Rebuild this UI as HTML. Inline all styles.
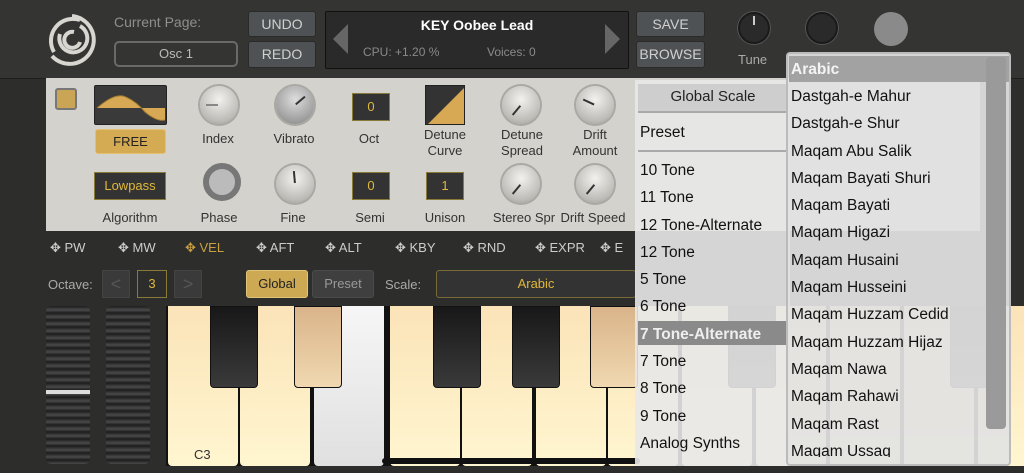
<!DOCTYPE html>
<html><head><style>
*{margin:0;padding:0;box-sizing:border-box}
body{width:1024px;height:473px;overflow:hidden;background:#2d2d2b;font-family:"Liberation Sans",sans-serif;position:relative}
.a{position:absolute}
.btn{position:absolute;background:#4f5254;border:1px solid #2a2a2a;color:#d0d0d0;font-size:14px;text-align:center;border-radius:3px}
.lbl{position:absolute;font-size:13px;color:#333;text-align:center;width:80px;line-height:16px}
.knob{position:absolute;width:38px;height:38px;border-radius:50%;background:radial-gradient(circle at 50% 35%,#f2f1ee,#bdbbb6 70%,#8d8b86);box-shadow:0 0 0 2px #aaa8a2}
.knob i{position:absolute;left:18px;top:6px;width:2px;height:12px;background:#333;transform-origin:1px 13px}
.dk{position:absolute;width:38px;height:28px;background:#333;border:1px solid #8a7a3a;color:#e0b83a;font-size:13px;text-align:center;line-height:26px}
.mod{position:absolute;top:240px;font-size:13px;color:#ccc}
.wk{position:absolute;top:306px;height:160px;width:70px;border-radius:0 0 4px 4px;background:linear-gradient(#fbe3b8,#fff6d0)}
.bk{position:absolute;top:306px;height:82px;width:48px;border-radius:0 0 4px 4px;background:linear-gradient(#181818,#3a3a3a);border:1px solid #111}
</style></head><body>
<div class="a" style="left:0;top:0;width:1024px;height:79px;background:#343432;border-bottom:1px solid #1e1e1e"></div>
<svg class="a" style="left:44px;top:12px" width="56" height="56" viewBox="0 0 56 56"><g fill="none" stroke="#d8d6d0" stroke-width="4"><path d="M28 4A24 24 0 1 1 8 44"/><path d="M10 40A22 22 0 0 1 36 8" /><path d="M36 14A14 14 0 1 1 16 22"/><path d="M30 20A8 8 0 1 0 36 30"/></g></svg>
<div class="a" style="left:114px;top:14px;color:#8e8e8c;font-size:14px">Current Page:</div>
<div class="a" style="left:114px;top:41px;width:124px;height:26px;border:2px solid #6a6a68;border-radius:5px;color:#bbb;font-size:13px;text-align:center;line-height:22px">Osc 1</div>
<div class="btn" style="left:248px;top:11px;width:68px;height:26px;line-height:24px">UNDO</div>
<div class="btn" style="left:248px;top:41px;width:68px;height:27px;line-height:25px">REDO</div>
<div class="a" style="left:325px;top:11px;width:304px;height:58px;background:#2a2a2a;border:1px solid #111;border-radius:2px"></div>
<div class="a" style="left:333px;top:24px;width:0;height:0;border-top:15px solid transparent;border-bottom:15px solid transparent;border-right:15px solid #666"></div>
<div class="a" style="left:605px;top:24px;width:0;height:0;border-top:15px solid transparent;border-bottom:15px solid transparent;border-left:15px solid #666"></div>
<div class="a" style="left:325px;top:17px;width:304px;text-align:center;color:#fff;font-weight:bold;font-size:14px">KEY Oobee Lead</div>
<div class="a" style="left:363px;top:45px;color:#8a8a8a;font-size:12px">CPU: +1.20 %</div>
<div class="a" style="left:487px;top:45px;color:#8a8a8a;font-size:12px">Voices: 0</div>
<div class="btn" style="left:636px;top:11px;width:69px;height:26px;line-height:24px">SAVE</div>
<div class="btn" style="left:636px;top:41px;width:69px;height:27px;line-height:25px">BROWSE</div>
<div class="a" style="left:738px;top:12px;width:32px;height:32px;border-radius:50%;background:#2a2a2a;border:2px solid #1a1a1a;box-shadow:0 0 0 1px #555"></div>
<div class="a" style="left:753px;top:16px;width:2px;height:9px;background:#ccc"></div>
<div class="a" style="left:738px;top:52px;color:#aaa;font-size:13px">Tune</div>
<div class="a" style="left:806px;top:12px;width:32px;height:32px;border-radius:50%;background:#2a2a2a;border:2px solid #1a1a1a;box-shadow:0 0 0 1px #555"></div>
<div class="a" style="left:874px;top:12px;width:34px;height:34px;border-radius:50%;background:#8a8a8a"></div>
<div class="a" style="left:46px;top:78px;width:934px;height:153px;background:#d4d2cc"></div>
<div class="a" style="left:55px;top:88px;width:22px;height:22px;background:#c9a555;border:2px solid #777;border-radius:3px"></div>
<div class="a" style="left:94px;top:85px;width:73px;height:40px;background:#3a3a3a;border:1px solid #222;border-radius:2px;overflow:hidden"><svg width="73" height="40"><path d="M2 22 Q18 8 28 10 Q40 14 50 26 Q62 36 70 34 L70 22 L2 22Z" fill="#d8a955"/><path d="M2 22 Q18 8 28 10 Q40 14 50 26 Q62 36 70 34" stroke="#a07a30" fill="none"/></svg></div>
<div class="a" style="left:95px;top:129px;width:71px;height:25px;background:#d4aa52;border:1px solid #e5c070;border-radius:3px;font-size:13px;text-align:center;line-height:24px;color:#222">FREE</div>
<div class="dk" style="left:94px;top:172px;width:72px;font-size:13px">Lowpass</div>
<div class="knob" style="left:200px;top:86px"><i style="transform:rotate(-90deg);background:#888"></i></div>
<div class="knob" style="left:276px;top:86px;background:radial-gradient(circle at 50% 35%,#ddd,#999 75%,#666)"><i style="transform:rotate(50deg)"></i></div>
<div class="dk" style="left:352px;top:93px">0</div>
<div class="a" style="left:425px;top:85px;width:40px;height:40px;background:#333;border:1px solid #222"><svg width="40" height="40"><path d="M2 38 L38 2 L38 38Z" fill="#d8a955"/></svg></div>
<div class="knob" style="left:502px;top:86px"><i style="transform:rotate(-140deg)"></i></div>
<div class="knob" style="left:576px;top:86px"><i style="transform:rotate(-65deg)"></i></div>
<div class="lbl" style="left:178px;top:131px">Index</div>
<div class="lbl" style="left:254px;top:131px">Vibrato</div>
<div class="lbl" style="left:329px;top:131px">Oct</div>
<div class="lbl" style="left:405px;top:127px">Detune<br>Curve</div>
<div class="lbl" style="left:482px;top:127px">Detune<br>Spread</div>
<div class="lbl" style="left:555px;top:127px">Drift<br>Amount</div>
<div class="a" style="left:203px;top:163px;width:38px;height:38px;border-radius:50%;border:6px solid #777;background:#bbb"></div>
<div class="knob" style="left:276px;top:165px"><i style="transform:rotate(-5deg)"></i></div>
<div class="dk" style="left:352px;top:172px">0</div>
<div class="dk" style="left:426px;top:172px">1</div>
<div class="knob" style="left:502px;top:165px"><i style="transform:rotate(-140deg)"></i></div>
<div class="knob" style="left:576px;top:165px"><i style="transform:rotate(-140deg)"></i></div>
<div class="lbl" style="left:90px;top:210px">Algorithm</div>
<div class="lbl" style="left:179px;top:210px">Phase</div>
<div class="lbl" style="left:253px;top:210px">Fine</div>
<div class="lbl" style="left:330px;top:210px">Semi</div>
<div class="lbl" style="left:405px;top:210px">Unison</div>
<div class="lbl" style="left:481px;top:210px;width:86px">Stereo Spr</div>
<div class="lbl" style="left:555px;top:210px;width:76px">Drift Speed</div>
<div class="mod" style="left:50px">✥ PW</div><div class="mod" style="left:118px">✥ MW</div><div class="mod" style="left:185px;color:#c9a040">✥ VEL</div><div class="mod" style="left:256px">✥ AFT</div><div class="mod" style="left:325px">✥ ALT</div><div class="mod" style="left:395px">✥ KBY</div><div class="mod" style="left:463px">✥ RND</div><div class="mod" style="left:535px">✥ EXPR</div><div class="mod" style="left:600px">✥ E</div>
<div class="a" style="left:48px;top:277px;color:#aaa;font-size:13px">Octave:</div>
<div class="a" style="left:102px;top:270px;width:28px;height:28px;background:#3a3a3a;border:1px solid #444;color:#555;text-align:center;font-size:18px;line-height:26px">&lt;</div>
<div class="a" style="left:137px;top:270px;width:30px;height:28px;border:1px solid #8a7a3a;color:#e0b83a;text-align:center;font-size:13px;line-height:26px">3</div>
<div class="a" style="left:174px;top:270px;width:28px;height:28px;background:#3a3a3a;border:1px solid #444;color:#555;text-align:center;font-size:18px;line-height:26px">&gt;</div>
<div class="a" style="left:246px;top:270px;width:62px;height:28px;background:#cda954;border:1px solid #e3c27a;border-radius:3px;text-align:center;line-height:26px;font-size:13px;color:#222">Global</div>
<div class="a" style="left:312px;top:270px;width:62px;height:28px;background:#3f3f3f;border:1px solid #4a4a4a;border-radius:3px;text-align:center;line-height:26px;font-size:13px;color:#999">Preset</div>
<div class="a" style="left:385px;top:277px;color:#aaa;font-size:13px">Scale:</div>
<div class="a" style="left:436px;top:270px;width:200px;height:28px;background:#333;border:1px solid #7a6a35;border-radius:3px;text-align:center;line-height:26px;font-size:13px;color:#e0b83a">Arabic</div>
<div class="a" style="left:46px;top:306px;width:44px;height:158px;border-radius:5px;background:repeating-linear-gradient(#1c1c1c 0,#4a4a4a 4px,#1c1c1c 7px)"></div>
<div class="a" style="left:46px;top:390px;width:44px;height:4px;background:#ddd"></div>
<div class="a" style="left:106px;top:306px;width:44px;height:158px;border-radius:5px;background:repeating-linear-gradient(#1c1c1c 0,#4a4a4a 4px,#1c1c1c 7px)"></div>
<div class="a" style="left:166px;top:306px;width:858px;height:160px;background:#111"></div>
<div class="wk" style="left:168px"></div><div class="wk" style="left:240px"></div><div class="wk" style="left:314px;background:linear-gradient(#f6f6f6,#e0e0e0)"></div>
<div class="wk" style="left:390px"></div><div class="wk" style="left:462px"></div><div class="wk" style="left:536px"></div><div class="wk" style="left:608px"></div><div class="wk" style="left:682px"></div><div class="wk" style="left:756px"></div><div class="wk" style="left:830px"></div><div class="wk" style="left:904px"></div><div class="wk" style="left:978px"></div>
<div class="bk" style="left:210px"></div><div class="bk" style="left:294px;background:linear-gradient(#dab48a,#f0d8b0)"></div>
<div class="bk" style="left:433px"></div><div class="bk" style="left:512px"></div><div class="bk" style="left:590px;background:linear-gradient(#dab48a,#f0d8b0)"></div>
<div class="bk" style="left:728px"></div><div class="bk" style="left:950px"></div>
<div class="a" style="left:194px;top:447px;font-size:13px;color:#333">C3</div>
<div class="a" style="left:382px;top:458px;width:258px;height:6px;background:#111;border-radius:3px"></div>
<div class="a" style="left:635px;top:80px;width:155px;height:386px;background:rgba(232,232,232,.9)"></div>
<div class="a" style="left:638px;top:84px;width:150px;height:28px;background:rgba(200,200,200,.8);text-align:center;font-size:15px;line-height:26px;color:#222">Global Scale</div>
<div class="a" style="left:638px;top:111px;width:150px;height:2px;background:#aaa"></div>
<div class="a" style="left:640px;top:124px;font-size:15.5px;color:#111">Preset</div>
<div class="a" style="left:638px;top:150px;width:150px;height:2px;background:#aaa"></div>
<div class="a" style="left:638px;top:321px;width:150px;height:24px;background:#8a8a8a"></div>
<div class="a" style="left:640px;top:157px;font-size:15.5px;line-height:27.3px;color:#111">10 Tone<br>11 Tone<br>12 Tone-Alternate<br>12 Tone<br>5 Tone<br>6 Tone<br><b style="color:#eee">7 Tone-Alternate</b><br>7 Tone<br>8 Tone<br>9 Tone<br>Analog Synths</div>
<div class="a" style="left:786px;top:52px;width:225px;height:414px;background:rgba(226,226,226,.93);border:2px solid #bbb;border-radius:4px"></div>
<div class="a" style="left:789px;top:56px;width:220px;height:26px;background:#a2a2a2"></div>
<div class="a" style="left:791px;top:61px;font-size:15.5px;font-weight:bold;color:#f4f4f4">Arabic</div>
<div class="a" style="left:986px;top:57px;width:20px;height:372px;background:#9a9a9a;border-radius:4px"></div>
<div class="a" style="left:791px;top:83px;font-size:15.5px;line-height:27.3px;color:#111;height:374px;overflow:hidden">Dastgah-e Mahur<br>Dastgah-e Shur<br>Maqam Abu Salik<br>Maqam Bayati Shuri<br>Maqam Bayati<br>Maqam Higazi<br>Maqam Husaini<br>Maqam Husseini<br>Maqam Huzzam Cedid<br>Maqam Huzzam Hijaz<br>Maqam Nawa<br>Maqam Rahawi<br>Maqam Rast<br>Maqam Ussaq</div>
</body></html>
